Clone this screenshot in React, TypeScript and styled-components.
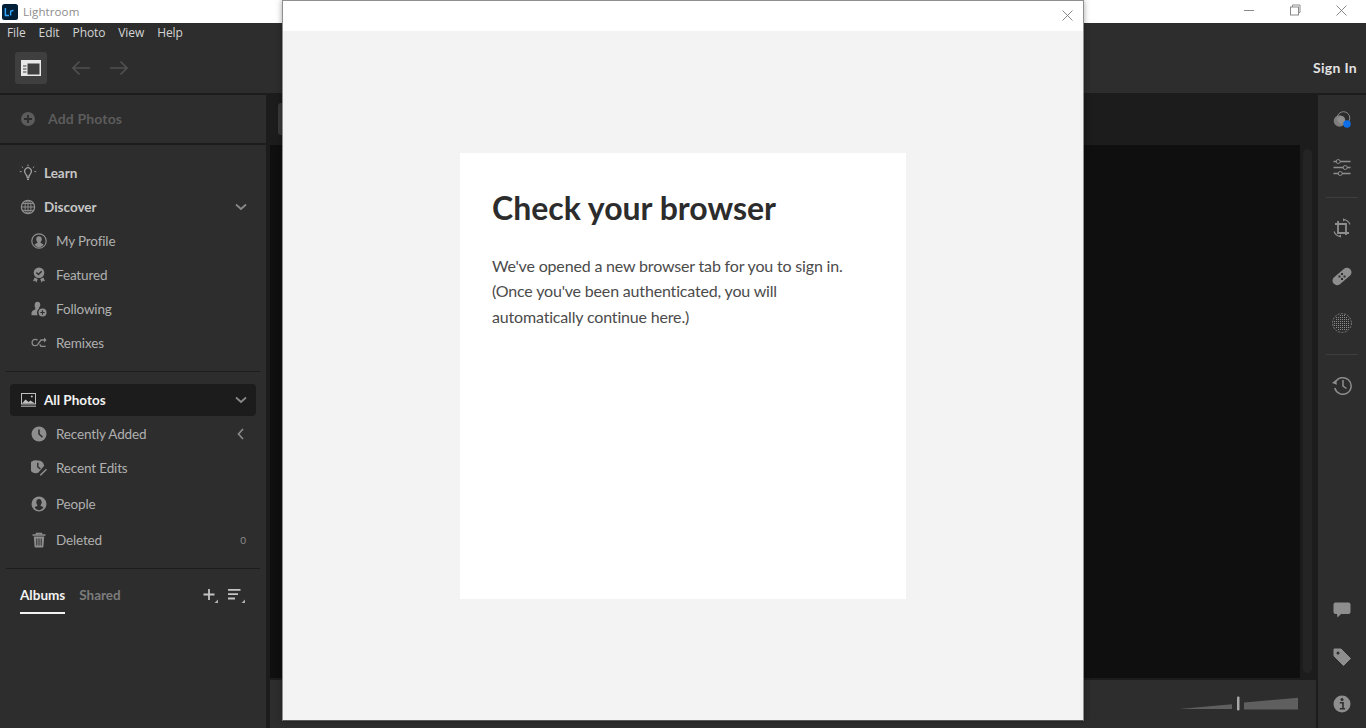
import React from "react";
import styled, { createGlobalStyle } from "styled-components";

const Global = createGlobalStyle`
  html, body { margin: 0; padding: 0; width: 100%; height: 100%; overflow: hidden; background: #2d2d2d; }
  * { box-sizing: border-box; }
`;

const UI = `Lato, "Liberation Sans", sans-serif`;
const SYS = `"Open Sans", "Liberation Sans", sans-serif`;

const Shell = styled.div`
  position: relative;
  width: 1366px;
  height: 728px;
  overflow: hidden;
  display: flex;
  flex-direction: column;
  background: #1c1c1c;
  font-family: ${UI};
`;

const TitleBar = styled.div`
  height: 23px;
  flex: none;
  background: #fff;
  display: flex;
  align-items: center;
  padding-left: 2px;
`;
const AppName = styled.span`
  margin-left: 5px;
  font: 400 11.5px ${SYS};
  color: #8c8c8c;
  letter-spacing: 0.1px;
`;
const WindowControls = styled.div`
  margin-left: auto;
  display: flex;
  height: 100%;
  padding-right: 2px;
`;
const WindowButton = styled.div`
  width: 46px;
  display: flex;
  align-items: center;
  justify-content: center;
  margin-top: -3px;
`;

const MenuBar = styled.div`
  height: 20px;
  flex: none;
  background: #2d2d2d;
  display: flex;
  align-items: center;
  padding: 0 0 2px 7px;
  gap: 13px;
  font: 400 12px ${SYS};
  letter-spacing: -0.1px;
  color: #d4d4d4;
`;

const Toolbar = styled.div`
  height: 50px;
  flex: none;
  background: #2d2d2d;
  display: flex;
  align-items: center;
  padding: 0 9px 0 15px;
`;
const PanelToggle = styled.div`
  width: 32px;
  height: 32px;
  border-radius: 3px;
  background: #3f3f3f;
  display: flex;
  align-items: center;
  justify-content: center;
  margin-right: 24px;
`;
const NavArrow = styled.div`
  width: 20px;
  height: 20px;
  margin-right: 18px;
  display: flex;
  align-items: center;
  justify-content: center;
`;
const SignIn = styled.div`
  margin-left: auto;
  margin-bottom: 2px;
  font: 700 14px ${UI};
  color: #e2e2e2;
  letter-spacing: 0.3px;
`;

const Main = styled.div`
  flex: 1;
  min-height: 0;
  margin-top: 2px;
  display: flex;
  background: #1c1c1c;
`;

const Sidebar = styled.aside`
  width: 266px;
  flex: none;
  display: flex;
  flex-direction: column;
  margin-right: 4px;
`;
const AddPhotos = styled.div`
  height: 48px;
  flex: none;
  background: #2d2d2d;
  display: flex;
  align-items: center;
  padding-left: 20px;
  gap: 12px;
  font: 700 14px ${UI};
  color: #5c5c5c;
  letter-spacing: 0.15px;
`;
const AddLabel = styled.span`
  margin-bottom: 2px;
`;
const Nav = styled.nav`
  flex: 1;
  margin-top: 2px;
  padding: 11px 10px 0;
  background: #2d2d2d;
  display: flex;
  flex-direction: column;
`;
const Row = styled.div<{ $h?: number; $sub?: boolean }>`
  height: ${(p) => p.$h ?? 34}px;
  flex: none;
  display: flex;
  align-items: center;
  padding-left: ${(p) => (p.$sub ? 20 : 9)}px;
  padding-right: 9px;
  font: ${(p) => (p.$sub ? "400" : "700")} 13.5px ${UI};
  letter-spacing: ${(p) => (p.$sub ? "-0.15px" : "0")};
  color: ${(p) => (p.$sub ? "#b0b0b0" : "#c6c6c6")};
`;
const RowIcon = styled.span`
  width: 18px;
  height: 18px;
  margin-right: 7px;
  display: flex;
  align-items: center;
  justify-content: center;
  flex: none;
`;
const SubIcon = styled(RowIcon)`
  margin-right: 8px;
`;
const RowEnd = styled.span`
  margin-left: auto;
  display: flex;
  align-items: center;
`;
const Count = styled(RowEnd)`
  font: 400 10px ${UI};
  color: #8a8a8a;
  padding-right: 1px;
`;
const Divider = styled.div<{ $before: number; $after: number }>`
  height: 1px;
  flex: none;
  background: #1d1d1d;
  margin: ${(p) => p.$before}px -4px ${(p) => p.$after}px;
`;
const ActiveRow = styled(Row)`
  height: 32px;
  background: #1c1c1c;
  border-radius: 4px;
  color: #f2f2f2;
  margin-bottom: 1px;
`;
const Tabs = styled.div`
  display: flex;
  align-items: flex-start;
  padding: 18px 10px 0 10px;
  height: 46px;
`;
const Tab = styled.div<{ $active?: boolean }>`
  font: 700 13.5px ${UI};
  color: ${(p) => (p.$active ? "#f2f2f2" : "#7c7c7c")};
  margin-right: 14px;
  height: 27px;
  border-bottom: ${(p) => (p.$active ? "2px solid #f2f2f2" : "0")};
  line-height: 17px;
`;
const TabActions = styled.div`
  margin-left: auto;
  display: flex;
  gap: 8px;
`;

const Center = styled.div`
  flex: 1;
  min-width: 0;
  display: flex;
  flex-direction: column;
  margin-right: 2px;
`;
const FilterStrip = styled.div`
  height: 50px;
  flex: none;
  padding: 8px 0 0 8px;
`;
const FilterTab = styled.div`
  width: 20px;
  height: 32px;
  background: #3a3a3a;
  border-radius: 3px;
`;
const Viewport = styled.div`
  height: 533px;
  flex: none;
  display: flex;
`;
const Canvas = styled.div`
  width: 1030px;
  background: #0f0f0f;
`;
const Scrollbar = styled.div`
  width: 9px;
  height: 524px;
  margin: 4px 0 0 3px;
  border-radius: 5px;
  background: #242424;
`;
const BottomBar = styled.div`
  flex: 1;
  margin-top: 2px;
  background: #2d2d2d;
  display: flex;
  justify-content: flex-end;
  padding: 16px 17px 0 0;
`;

const RightPanel = styled.aside`
  width: 48px;
  flex: none;
  background: #2d2d2d;
  display: flex;
  flex-direction: column;
  align-items: center;
`;
const ToolSlot = styled.div<{ $h?: number }>`
  height: ${(p) => p.$h ?? 47}px;
  flex: none;
  width: 100%;
  display: flex;
  align-items: center;
  justify-content: center;
`;
const ToolDivider = styled.div<{ $before: number; $after: number }>`
  width: 32px;
  height: 1px;
  flex: none;
  background: #3e3e3e;
  margin: ${(p) => p.$before}px 0 ${(p) => p.$after}px;
`;
const Spacer = styled.div`
  flex: 1;
`;

const Modal = styled.div`
  position: absolute;
  left: 282px;
  top: 0;
  width: 802px;
  height: 721px;
  border: 1px solid #8f8f8f;
  border-bottom-color: #5a5a5a;
  background: #f3f3f3;
  box-shadow: 0 0 6px rgba(0, 0, 0, 0.35);
  display: flex;
  flex-direction: column;
`;
const ModalHeader = styled.div`
  height: 30px;
  flex: none;
  background: #fff;
  display: flex;
  justify-content: flex-end;
  align-items: center;
  padding: 0 10px 2px 0;
`;
const ModalBody = styled.div`
  flex: 1;
  display: flex;
  justify-content: center;
  align-items: flex-start;
  padding-top: 122px;
`;
const Card = styled.div`
  width: 446px;
  height: 446px;
  background: #fff;
  padding: 32px;
`;
const Heading = styled.h1`
  margin: 0 0 22px;
  font: 700 32px/46px ${UI};
  color: #2c2c2c;
`;
const Body = styled.p`
  margin: 0;
  font: 400 16px/25.4px ${UI};
  letter-spacing: -0.17px;
  color: #4b4b4b;
`;

const G = "#8e8e8e";

const Svg = ({ s = 18, w, h, children }: { s?: number; w?: number; h?: number; children: React.ReactNode }) => (
  <svg width={w ?? s} height={h ?? s} viewBox={`0 0 ${w ?? s} ${h ?? s}`} fill="none">{children}</svg>
);

const LrLogo = () => (
  <Svg s={16}>
    <rect width="16" height="16" rx="2.5" fill="#001e36" />
    <path d="M3.4 4v7.4h3.6" stroke="#31a8ff" strokeWidth="1.5" />
    <path d="M8.6 11.4V6.4M8.6 7.8c.5-1 1.6-1.4 2.9-1.3" stroke="#31a8ff" strokeWidth="1.4" />
  </Svg>
);
const Minimize = () => <Svg w={12} h={3}><path d="M1 1.5h10" stroke="#8a8a8a" /></Svg>;
const Restore = () => (
  <Svg s={12}>
    <rect x="1.5" y="3" width="8" height="8" stroke="#8a8a8a" />
    <path d="M3.5 3V1h7.5v7.5H9.5" stroke="#8a8a8a" />
  </Svg>
);
const Cross = () => (
  <Svg s={11}>
    <path d="M.5.5l10 10M10.5.5l-10 10" stroke="#7a7a7a" strokeWidth="0.9" />
  </Svg>
);
const PanelIcon = () => (
  <Svg w={20} h={16}>
    <rect x="0.75" y="0.75" width="18.5" height="14.5" stroke="#e8e8e8" strokeWidth="1.5" />
    <rect x="1" y="1" width="18" height="2.5" fill="#e8e8e8" />
    <rect x="1" y="3" width="5.5" height="12" fill="#e8e8e8" />
    <path d="M2 6h3.5M2 9h3.5M2 12h3.5" stroke="#3f3f3f" />
  </Svg>
);
const ArrowL = () => (
  <Svg w={20} h={16}><path d="M19 8H2M8.5 1.5L2 8l6.5 6.5" stroke="#505050" strokeWidth="1.7" /></Svg>
);
const ArrowR = () => (
  <Svg w={20} h={16}><path d="M1 8h17M11.5 1.5L18 8l-6.5 6.5" stroke="#505050" strokeWidth="1.7" /></Svg>
);
const PlusCircle = () => (
  <Svg s={16}>
    <circle cx="8" cy="8" r="7" fill="#5c5c5c" />
    <path d="M8 4v8M4 8h8" stroke="#2d2d2d" strokeWidth="1.8" />
  </Svg>
);
const Bulb = () => (
  <Svg>
    <path d="M6.2 9.2a3.4 3.4 0 1 1 5.6 0c-.7 1-1.3 1.7-1.5 3H7.7c-.2-1.3-.8-2-1.5-3z" stroke="#a0a0a0" strokeWidth="1.2" />
    <path d="M7.6 13.6h2.8M8 15.4h2" stroke="#a0a0a0" strokeWidth="1.3" />
    <path d="M9 .5v1.8M2.8 2.6l1.3 1.2M15.2 2.6l-1.3 1.2M.8 7.6h1.8M15.4 7.6h1.8" stroke="#a0a0a0" strokeWidth="1" />
  </Svg>
);
const Globe = () => (
  <Svg s={16}>
    <circle cx="8" cy="8" r="6.6" stroke={G} strokeWidth="1.3" />
    <ellipse cx="8" cy="8" rx="3" ry="6.6" stroke={G} />
    <path d="M8 1.4v13.2M1.4 8h13.2M2.4 4.6h11.2M2.4 11.4h11.2" stroke={G} />
  </Svg>
);
const ProfileIcon = () => (
  <Svg s={16}>
    <circle cx="8" cy="8" r="7.2" stroke={G} strokeWidth="1.2" />
    <path d="M8 3.2c1.8 0 2.8 1.3 2.8 3 0 1.2-.5 2.2-1.2 2.8v.9c1.3.4 2.4 1 3 1.9A6.3 6.3 0 0 1 8 14.4a6.3 6.3 0 0 1-4.6-2.6c.6-.9 1.7-1.5 3-1.9V9c-.7-.6-1.2-1.6-1.2-2.8 0-1.7 1-3 2.8-3z" fill={G} />
  </Svg>
);
const Award = () => (
  <Svg s={16}>
    <circle cx="8" cy="5.8" r="5.3" fill={G} />
    <path d="M5.400 5.500l2 2 3.300-3.300" stroke="#2d2d2d" strokeWidth="1.400" />
    <path d="M3.600 10.600L2 14.200l2.300-.4 1 2 1.500-3.700zM12.400 10.600l1.600 3.600-2.300-.4-1 2-1.500-3.700z" fill={G} />
  </Svg>
);
const Following = () => (
  <Svg s={16}>
    <path d="M6.500.8c1.700 0 2.800 1.300 2.800 3 0 1.100-.5 2.200-1.200 2.800v1A5 5 0 0 0 6 11.500c0 1 .2 2 .7 2.700H.5v-2.400c0-1.400 2-2.600 3.700-3.200v-2C3.500 6 3.700 4.900 3.700 3.800c0-1.700 1.100-3 2.800-3z" fill={G} />
    <circle cx="11.500" cy="11.500" r="4" fill={G} />
    <path d="M11.500 9.300v4.400M9.300 11.500h4.400" stroke="#2d2d2d" strokeWidth="1.200" />
  </Svg>
);
const Remix = () => (
  <Svg s={16}>
    <path d="M6.500 5.200A3 3 0 0 0 4.300 4.300a3.200 3.200 0 0 0 0 6.400c.9 0 1.700-.4 2.300-1.100L10 5h4.600" stroke={G} strokeWidth="1.300" />
    <path d="M8.700 9.300l1.300 2h4.600" stroke={G} strokeWidth="1.300" />
    <path d="M13 2.600l2.600 2.400-2.600 2.400z" fill={G} />
  </Svg>
);
const ImageIcon = () => (
  <Svg w={15} h={14}>
    <rect x="0.500" y="0.500" width="14" height="10.500" stroke="#c0c0c0" />
    <path d="M1 10.500l3.500-4 3 2.500 2-1.500 4.500 3z" fill="#c0c0c0" />
    <circle cx="10.800" cy="3.500" r="1" fill="#c0c0c0" />
    <path d="M0 13.200h15" stroke="#c0c0c0" />
  </Svg>
);
const Clock = () => (
  <Svg s={16}>
    <circle cx="8" cy="8" r="7.500" fill={G} />
    <path d="M8 3.500V8l3.500 3.300" stroke="#2d2d2d" strokeWidth="1.500" />
  </Svg>
);
const RecentEdits = () => (
  <Svg s={16}>
    <path d="M6.800.5a6.500 6.500 0 0 1 6.400 5.300L7.500 12.600A6.500 6.500 0 1 1 6.800.5z" fill={G} />
    <path d="M6.800 2.800v4.200l2.600 1.800" stroke="#2d2d2d" strokeWidth="1.400" />
    <path d="M9 14.500l6-5.800 1 1-5.800 5.800H9z" fill={G} />
  </Svg>
);
const PersonCircle = () => (
  <Svg s={16}>
    <circle cx="8" cy="8" r="7.500" fill={G} />
    <path d="M8 3c1.700 0 2.700 1.300 2.700 3.200 0 1.200-.5 2.200-1.100 2.800v1c1.100.3 2.200.8 2.800 1.600A6 6 0 0 1 8 14.200a6 6 0 0 1-4.400-2.600c.6-.8 1.700-1.300 2.800-1.600V9c-.6-.6-1.100-1.600-1.100-2.800C5.300 4.300 6.300 3 8 3z" fill="#2d2d2d" />
  </Svg>
);
const Trash = () => (
  <Svg s={16}>
    <path d="M1.500 3h13M5.500 3V1.300h5V3" stroke={G} strokeWidth="1.300" />
    <path d="M2.800 4.500h10.400l-.8 10.300a.8.8 0 0 1-.8.700H4.400a.8.800 0 0 1-.8-.7z" fill={G} />
    <path d="M5.800 6.500v7M8 6.500v7M10.200 6.500v7" stroke="#2d2d2d" strokeWidth="1" />
  </Svg>
);
const Chevron = ({ dir = "down" }: { dir?: "down" | "left" }) => (
  <Svg s={12}>
    <path d={dir === "down" ? "M1 3.500l5 4.500 5-4.500" : "M8 1L3.500 6 8 11"} stroke="#8a8a8a" strokeWidth="1.700" />
  </Svg>
);
const AddAlbum = () => (
  <Svg s={18}>
    <path d="M8 2v11M2.500 7.500h11" stroke="#c4c4c4" strokeWidth="1.800" />
    <path d="M17 12.500V16h-3.500z" fill="#b0b0b0" />
  </Svg>
);
const SortAlbum = () => (
  <Svg w={19} h={18}>
    <path d="M1 2.800h12.500M1 7.200h10M1 11.500h7" stroke="#c4c4c4" strokeWidth="1.800" />
    <path d="M18 12.500V16h-3.500z" fill="#b0b0b0" />
  </Svg>
);
const ColorTool = () => (
  <Svg>
    <circle cx="6.500" cy="10" r="5.800" fill="#7d7d7d" />
    <circle cx="10.500" cy="7" r="6.300" stroke="#8e8e8e" strokeWidth="0.900" />
    <circle cx="8.500" cy="8.500" r="3.500" fill="#9a9a9a" opacity="0.600" />
    <circle cx="14" cy="13" r="3.700" fill="#0f6fe8" />
  </Svg>
);
const Sliders = () => (
  <Svg>
    <path d="M.5 3.500h3M7 3.500h10.500M.5 9.500h10M14 9.500h3.500M.5 15.500h5M9 15.500h8.500" stroke={G} strokeWidth="1.300" />
    <circle cx="5.200" cy="3.500" r="2" stroke={G} />
    <circle cx="12.200" cy="9.500" r="2" stroke={G} />
    <circle cx="7.200" cy="15.500" r="2" stroke={G} />
  </Svg>
);
const Crop = () => (
  <Svg s={20}>
    <path d="M6 3v12h11M3 6h11v11" stroke={G} strokeWidth="1.800" />
    <path d="M11.500 1.500A8 8 0 0 1 18 6.500M8.500 18.500A8 8 0 0 1 2 13.500" stroke={G} strokeWidth="1.200" />
    <path d="M11 .2v3.200l2.400-1.700zM9 19.800v-3.200l-2.400 1.700z" fill={G} />
  </Svg>
);
const Bandage = () => (
  <Svg s={20}>
    <rect x="-1" y="6" width="22" height="9" rx="4.500" transform="rotate(-40 10 10.500)" fill={G} />
    <g fill="#2d2d2d">
      <rect x="9" y="7" width="2" height="2" />
      <rect x="6.500" y="9.500" width="2" height="2" />
      <rect x="11.500" y="9.500" width="2" height="2" />
      <rect x="9" y="12" width="2" height="2" />
    </g>
  </Svg>
);
const MaskDots = () => {
  const dots: React.ReactNode[] = [];
  for (let y = 2; y < 19; y += 2) {
    for (let x = 2; x < 19; x += 2) {
      if ((x - 9.5) ** 2 + (y - 9.5) ** 2 <= 66) {
        dots.push(<rect key={`${x}-${y}`} x={x} y={y} width="1" height="1" fill="#8a8a8a" />);
      }
    }
  }
  return (
    <Svg s={20}>
      <circle cx="10" cy="10" r="9.400" stroke="#7e7e7e" strokeDasharray="2 1.300" />
      {dots}
    </Svg>
  );
};
const History = () => (
  <Svg s={20}>
    <path d="M3.300 7.500A8.300 8.300 0 1 1 2.800 13" stroke={G} strokeWidth="1.500" />
    <path d="M0 8l3.800-3 1.200 4.800z" fill={G} />
    <path d="M11 5v6l3.500 2.500" stroke={G} strokeWidth="1.500" />
  </Svg>
);
const Comment = () => (
  <Svg w={18} h={16}>
    <path d="M2.500.5h13a2 2 0 0 1 2 2v7.500a2 2 0 0 1-2 2H8l-3.500 3.500-.5-3.500H2.500a2 2 0 0 1-2-2V2.500a2 2 0 0 1 2-2z" fill={G} />
  </Svg>
);
const Tag = () => (
  <Svg>
    <path d="M1 1h7l9.500 9.500-7 7L1 8z" fill={G} stroke={G} strokeLinejoin="round" />
    <circle cx="5" cy="5" r="1.500" fill="#2d2d2d" />
  </Svg>
);
const Info = () => (
  <Svg>
    <circle cx="9" cy="9" r="8.500" fill={G} />
    <circle cx="9" cy="4.500" r="1.500" fill="#2d2d2d" />
    <path d="M6.800 7.800H10v5.500M6.800 13.800h5.200" stroke="#2d2d2d" strokeWidth="1.600" />
  </Svg>
);
const ZoomSlider = () => (
  <Svg w={120} h={16}>
    <path d="M0 13l53-4.800V13z" fill="#5f5f5f" />
    <rect x="58" y="0.500" width="2.500" height="14" rx="1" fill="#a8a8a8" />
    <path d="M65 6.500L119 1.800V13.500H65z" fill="#5f5f5f" />
  </Svg>
);

const discover = [
  { label: "My Profile", icon: <ProfileIcon /> },
  { label: "Featured", icon: <Award /> },
  { label: "Following", icon: <Following /> },
  { label: "Remixes", icon: <Remix /> },
];

export default function App() {
  return (
    <Shell>
      <Global />
      <TitleBar>
        <LrLogo />
        <AppName>Lightroom</AppName>
        <WindowControls>
          <WindowButton><Minimize /></WindowButton>
          <WindowButton><Restore /></WindowButton>
          <WindowButton><Cross /></WindowButton>
        </WindowControls>
      </TitleBar>
      <MenuBar>
        <span>File</span>
        <span>Edit</span>
        <span>Photo</span>
        <span>View</span>
        <span>Help</span>
      </MenuBar>
      <Toolbar>
        <PanelToggle><PanelIcon /></PanelToggle>
        <NavArrow><ArrowL /></NavArrow>
        <NavArrow><ArrowR /></NavArrow>
        <SignIn>Sign In</SignIn>
      </Toolbar>
      <Main>
        <Sidebar>
          <AddPhotos>
            <PlusCircle />
            <AddLabel>Add Photos</AddLabel>
          </AddPhotos>
          <Nav>
            <Row><RowIcon><Bulb /></RowIcon>Learn</Row>
            <Row>
              <RowIcon><Globe /></RowIcon>Discover
              <RowEnd><Chevron /></RowEnd>
            </Row>
            {discover.map((d) => (
              <Row $sub key={d.label}>
                <SubIcon>{d.icon}</SubIcon>
                {d.label}
              </Row>
            ))}
            <Divider $before={11} $after={12} />
            <ActiveRow>
              <RowIcon><ImageIcon /></RowIcon>All Photos
              <RowEnd><Chevron /></RowEnd>
            </ActiveRow>
            <Row $sub>
              <SubIcon><Clock /></SubIcon>Recently Added
              <RowEnd><Chevron dir="left" /></RowEnd>
            </Row>
            <Row $sub>
              <SubIcon><RecentEdits /></SubIcon>Recent Edits
            </Row>
            <Row $sub $h={38}>
              <SubIcon><PersonCircle /></SubIcon>People
            </Row>
            <Row $sub>
              <SubIcon><Trash /></SubIcon>Deleted
              <Count>0</Count>
            </Row>
            <Divider $before={11} $after={0} />
            <Tabs>
              <Tab $active>Albums</Tab>
              <Tab>Shared</Tab>
              <TabActions>
                <AddAlbum />
                <SortAlbum />
              </TabActions>
            </Tabs>
          </Nav>
        </Sidebar>
        <Center>
          <FilterStrip><FilterTab /></FilterStrip>
          <Viewport>
            <Canvas />
            <Scrollbar />
          </Viewport>
          <BottomBar><ZoomSlider /></BottomBar>
        </Center>
        <RightPanel>
          <ToolSlot $h={50}><ColorTool /></ToolSlot>
          <ToolSlot $h={44}><Sliders /></ToolSlot>
          <ToolDivider $before={8} $after={7} />
          <ToolSlot $h={46}><Crop /></ToolSlot>
          <ToolSlot $h={50}><Bandage /></ToolSlot>
          <ToolSlot $h={44}><MaskDots /></ToolSlot>
          <ToolDivider $before={9} $after={7} />
          <ToolSlot $h={46}><History /></ToolSlot>
          <Spacer />
          <ToolSlot><Comment /></ToolSlot>
          <ToolSlot><Tag /></ToolSlot>
          <ToolSlot $h={48}><Info /></ToolSlot>
        </RightPanel>
      </Main>
      <Modal>
        <ModalHeader><Cross /></ModalHeader>
        <ModalBody>
          <Card>
            <Heading>Check your browser</Heading>
            <Body>
              We've opened a new browser tab for you to sign in.
              <br />
              (Once you've been authenticated, you will
              <br />
              automatically continue here.)
            </Body>
          </Card>
        </ModalBody>
      </Modal>
    </Shell>
  );
}
